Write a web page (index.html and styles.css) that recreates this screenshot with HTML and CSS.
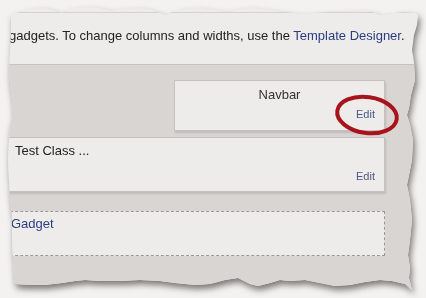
FILE: index.html
```html
<!DOCTYPE html>
<html lang="en">
<head>
    <meta charset="UTF-8">
    <title>Layout - Navbar</title>
    <link rel="stylesheet" href="styles.css">
</head>
<body>
    <div class="sheet">
        <div class="paper">
            <div class="intro">
                gadgets. To change columns and widths, use the <a class="link" href="#">Template Designer</a>.
            </div>

            <div class="layout">
                <!-- Navbar gadget -->
                <div class="gadget navbar">
                    <div class="gadget-title">Navbar</div>
                    <a class="edit" href="#">Edit</a>
                </div>

                <!-- Header gadget -->
                <div class="gadget header">
                    <div class="gadget-name">Test Class ...</div>
                    <a class="edit" href="#">Edit</a>
                </div>

                <!-- Empty section -->
                <div class="add-gadget">
                    <a class="link" href="#">Gadget</a>
                </div>
            </div>

            <!-- hand drawn circle round the Edit link -->
            <svg class="circle" width="70" height="46" viewBox="0 0 70 46">
                <ellipse cx="35" cy="23" rx="30" ry="18" transform="rotate(8 35 23)"
                         fill="none" stroke="#a8121a" stroke-width="4"/>
            </svg>
        </div>
    </div>
</body>
</html>
```

FILE: styles.css
```css
* {
    margin: 0;
    padding: 0;
    box-sizing: border-box;
}

body {
    background: #f3f2f0;
    font-family: 'Liberation Sans', Arial, sans-serif;
    font-size: 13px;
    color: #222;
    width: 426px;
    height: 298px;
    overflow: hidden;
}

.sheet {
    filter: drop-shadow(2px 4px 3px rgba(0, 0, 0, 0.5));
}

.paper {
    position: relative;
    width: 426px;
    height: 298px;
    background: #eeecea;
    overflow: hidden;
    clip-path: polygon(
        11px 14px, 20px 12px, 30px 9px, 45px 8px, 55px 11px, 62px 13px, 70px 9px, 85px 7px,
        100px 8px, 112px 11px, 125px 9px, 140px 8px, 152px 10px, 160px 13px, 166px 15px,
        172px 12px, 185px 9px, 200px 8px, 215px 10px, 228px 12px, 240px 9px, 255px 8px,
        270px 10px, 285px 12px, 300px 14px, 315px 13px, 330px 12px, 345px 12px, 360px 11px,
        372px 12px, 380px 15px, 390px 14px, 402px 12px, 416px 13px,
        418px 16px, 417px 25px, 414px 35px, 412px 50px, 414px 62px, 415px 80px, 411px 95px,
        409px 108px, 407px 115px, 410px 125px, 413px 140px, 412px 160px, 409px 175px,
        407px 185px, 410px 200px, 412px 220px, 410px 240px, 408px 255px, 410px 268px,
        409px 278px, 412px 290px,
        405px 284px, 392px 281px, 380px 280px, 365px 282px, 350px 285px, 335px 286px,
        320px 283px, 305px 280px, 290px 281px, 280px 280px, 270px 283px, 258px 286px,
        250px 284px, 238px 278px, 225px 280px, 210px 284px, 195px 285px, 175px 283px,
        160px 281px, 140px 280px, 120px 281px, 100px 281px, 85px 280px, 75px 281px,
        62px 283px, 45px 285px, 30px 285px, 15px 284px,
        14px 280px, 13px 260px, 12px 240px, 12px 215px, 10px 200px, 9px 180px, 8px 160px,
        9px 140px, 10px 125px, 13px 115px, 12px 100px, 10px 85px, 9px 70px, 10px 50px,
        11px 35px, 11px 20px
    );
}

.intro {
    margin-top: 12px;
    border-top: 1px solid #d4d1ce;
    padding: 15px 0 20px 9px;
    line-height: 16px;
    white-space: nowrap;
}

.link {
    color: #2b3d7f;
    text-decoration: none;
}

.layout {
    background: #d8d5d2;
    border-top: 1px solid #c6c3c0;
    padding: 15px 0 40px 0;
    height: 234px;
}

.gadget {
    background: #eeecea;
    border: 1px solid #c4c1be;
    box-shadow: 1px 2px 2px rgba(0, 0, 0, 0.12);
    display: flex;
    flex-direction: column;
}

.navbar {
    margin-left: 174px;
    width: 211px;
    height: 51px;
    padding: 6px 9px 0 0;
}

.gadget-title {
    text-align: center;
    color: #333;
    line-height: 16px;
    padding-left: 9px;
}

.edit {
    align-self: flex-end;
    color: #4c5781;
    font-size: 11px;
    line-height: 13px;
    text-decoration: none;
    margin-top: 5px;
}

.header {
    margin: 6px 0 0 -10px;
    width: 395px;
    height: 55px;
    padding: 5px 9px 0 24px;
}

.gadget-name {
    line-height: 16px;
}

.header .edit {
    margin-top: 11px;
}

.add-gadget {
    margin: 19px 0 0 -10px;
    width: 395px;
    height: 45px;
    background: #eeecea;
    border: 1px dashed #9a9896;
    padding: 4px 0 0 20px;
    line-height: 16px;
}

.circle {
    position: absolute;
    left: 332px;
    top: 92px;
}
```
